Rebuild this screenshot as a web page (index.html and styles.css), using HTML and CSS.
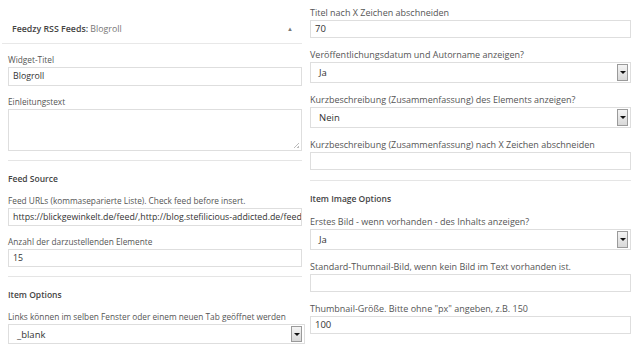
FILE: index.html
```html
<!DOCTYPE html>
<html lang="de">
<head>
    <meta charset="UTF-8">
    <title>Feedzy RSS Feeds Widget</title>
    <link rel="stylesheet" href="styles.css">
</head>
<body>
    <div class="page">
        <div class="col col-left">
            <div class="widget-head">
                <span class="widget-title"><b>Feedzy RSS Feeds:</b> Blogroll</span>
                <span class="toggle">▲</span>
            </div>

            <div class="field">
                <label>Widget-Titel</label>
                <div class="input">Blogroll</div>
            </div>
            <div class="field">
                <label>Einleitungstext</label>
                <div class="textarea"><span class="grip"></span></div>
            </div>

            <div class="divider"></div>
            <h4>Feed Source</h4>

            <div class="field">
                <label>Feed URLs (kommaseparierte Liste). Check feed before insert.</label>
                <div class="input small">https://blickgewinkelt.de/feed/,http://blog.stefilicious-addicted.de/feed</div>
            </div>
            <div class="field">
                <label>Anzahl der darzustellenden Elemente</label>
                <div class="input small">15</div>
            </div>

            <div class="divider"></div>
            <h4>Item Options</h4>

            <div class="field">
                <label>Links können im selben Fenster oder einem neuen Tab geöffnet werden</label>
                <div class="select wide">_blank<span class="arrow"></span></div>
            </div>
        </div>

        <div class="col col-right">
            <div class="field first">
                <label>Titel nach X Zeichen abschneiden</label>
                <div class="input small">70</div>
            </div>
            <div class="field">
                <label>Veröffentlichungsdatum und Autorname anzeigen?</label>
                <div class="select">Ja<span class="arrow"></span></div>
            </div>
            <div class="field">
                <label>Kurzbeschreibung (Zusammenfassung) des Elements anzeigen?</label>
                <div class="select">Nein<span class="arrow"></span></div>
            </div>
            <div class="field">
                <label>Kurzbeschreibung (Zusammenfassung) nach X Zeichen abschneiden</label>
                <div class="input small"></div>
            </div>

            <div class="divider"></div>
            <h4>Item Image Options</h4>

            <div class="field">
                <label>Erstes Bild - wenn vorhanden - des Inhalts anzeigen?</label>
                <div class="select">Ja<span class="arrow"></span></div>
            </div>
            <div class="field">
                <label>Standard-Thumnail-Bild, wenn kein Bild im Text vorhanden ist.</label>
                <div class="input small"></div>
            </div>
            <div class="field">
                <label>Thumbnail-Größe. Bitte ohne "px" angeben, z.B. 150</label>
                <div class="input small">100</div>
            </div>
        </div>
    </div>
</body>
</html>
```

FILE: styles.css
```css
* {
    margin: 0;
    padding: 0;
    box-sizing: border-box;
}

body {
    font-family: 'Open Sans', 'Noto Sans', Arial, sans-serif;
    color: #555;
    background: white;
}

.page {
    display: flex;
    gap: 5px;
}

.col-left {
    width: 305px;
    font-size: 8.3px;
}

.col-right {
    width: 321px;
    font-size: 9px;
}

.widget-head {
    display: flex;
    justify-content: space-between;
    align-items: center;
    height: 44px;
    padding: 15px 9px 0 10px;
    margin: 0 3px 0 2px;
    border-bottom: 1px solid #e8e8e8;
}

.widget-title {
    color: #777;
    font-size: 8.8px;
}

.widget-title b {
    color: #444;
    font-weight: 600;
}

.toggle {
    font-size: 6px;
    color: #777;
}

.col-left .field,
.col-left h4,
.col-left .divider {
    margin-left: 8px;
    margin-right: 3px;
}

.col-left .field .select.wide {
    margin-right: -3px;
    height: 20px;
}

.field {
    margin-top: 10px;
}

.col-right .field {
    margin-top: 11px;
}

.col-right .field.first {
    margin-top: 7px;
}

label {
    display: block;
    line-height: 12px;
    margin-bottom: 1px;
}

.input {
    height: 19px;
    border: 1px solid #dedede;
    background: white;
    color: #333;
    padding: 0 4px;
    line-height: 17px;
    font-size: 8.8px;
    white-space: nowrap;
    overflow: hidden;
}

.col-right .input {
    font-size: 9.5px;
}

.input.small {
    height: 18px;
    line-height: 16px;
}

.textarea {
    position: relative;
    height: 42px;
    border: 1px solid #dedede;
}

.grip {
    position: absolute;
    right: 2px;
    bottom: 2px;
    width: 5px;
    height: 5px;
    background: linear-gradient(135deg, transparent 45%, #bbb 45%, #bbb 55%, transparent 55%, transparent 75%, #bbb 75%);
}

.select {
    display: flex;
    justify-content: space-between;
    align-items: center;
    height: 21px;
    border: 1px solid #dedede;
    color: #333;
    padding: 0 2px 0 8px;
    font-size: 9.5px;
}

.col-right .select {
    margin-bottom: 3px;
}

.arrow {
    position: relative;
    width: 11px;
    height: 17px;
    border: 1px solid #9a9a9a;
    background: linear-gradient(#f4f4f4, #d8d8d8);
}

.wide .arrow {
    height: 16px;
}

.arrow::after {
    content: "";
    position: absolute;
    left: 2px;
    top: 6px;
    border-left: 3px solid transparent;
    border-right: 3px solid transparent;
    border-top: 3px solid #111;
}

.divider {
    height: 1px;
    background: #e5e5e5;
    margin-top: 9px;
}

.col-right .divider {
    margin-top: 10px;
}

h4 {
    font-size: 8.5px;
    font-weight: 600;
    color: #444;
    line-height: 12px;
    margin-top: 12px;
}

.col-right h4 {
    margin-bottom: 4px;
}
```
